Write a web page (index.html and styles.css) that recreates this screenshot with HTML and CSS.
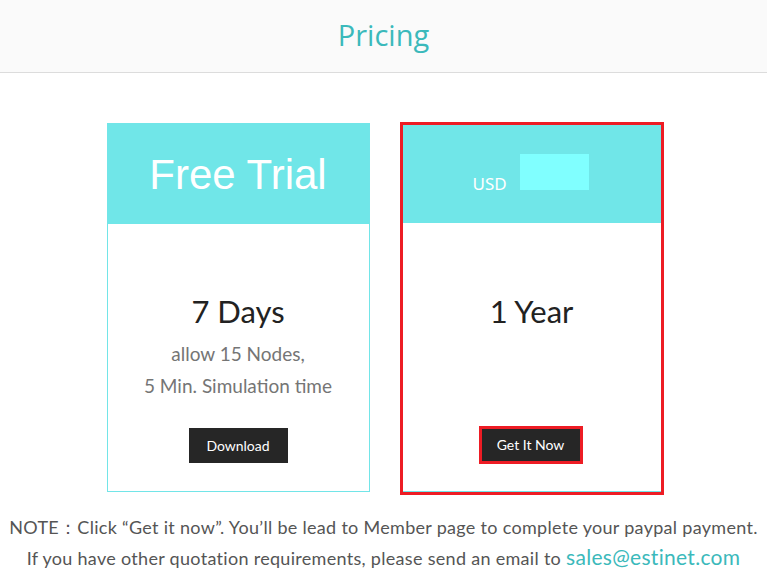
FILE: index.html
```html
<!DOCTYPE html>
<html lang="en">
  <head>
    <meta charset="UTF-8" />
    <meta name="viewport" content="width=device-width, initial-scale=1.0" />
    <title>Pricing</title>
    <link rel="stylesheet" href="styles.css">
  </head>
  <body>
    <header class="top">
      <h1>Pricing</h1>
    </header>

    <!-- Kartu harga -->
    <div class="plans">
      <div class="card card-trial">
        <div class="card-head">
          <span class="trial">Free Trial</span>
        </div>
        <div class="card-body">
          <h2>7 Days</h2>
          <p class="desc">allow 15 Nodes,<br />5 Min. Simulation time</p>
          <a class="btn" href="#">Download</a>
        </div>
      </div>

      <div class="card-mark">
        <div class="card card-year">
          <div class="card-head">
            <span class="usd">USD</span>
            <span class="price-box"></span>
          </div>
          <div class="card-body">
            <h2>1 Year</h2>
            <p class="desc"></p>
            <span class="btn-mark"><a class="btn" href="#">Get It Now</a></span>
          </div>
        </div>
      </div>
    </div>

    <div class="note">
      <p>NOTE：Click “Get it now”. You’ll be lead to Member page to complete your paypal payment.</p>
      <p>If you have other quotation requirements, please send an email to <a href="#">sales@estinet.com</a></p>
    </div>
  </body>
</html>
```

FILE: styles.css
```css
* {
  margin: 0;
  padding: 0;
  box-sizing: border-box;
}

body {
  font-family: Lato, "Open Sans", sans-serif;
  background: #fff;
  color: #333;
  width: 767px;
}

.top {
  height: 73px;
  background: #fafafa;
  border-bottom: 1px solid #dcdcdc;
  display: flex;
  justify-content: center;
  align-items: center;
}

.top h1 {
  font-family: "Open Sans", sans-serif;
  font-weight: 400;
  font-size: 29px;
  color: #3bb9bb;
  margin-bottom: 4px;
}

.plans {
  display: flex;
  justify-content: center;
  align-items: flex-start;
  gap: 30px;
  margin-top: 50px;
  padding-left: 3px;
}

.card {
  width: 263px;
  height: 369px;
  background: #fff;
  display: flex;
  flex-direction: column;
}

.card-trial {
  border: 1px solid #72e5e8;
}

.card-head {
  height: 100px;
  background: #70e6e8;
  display: flex;
  justify-content: center;
  align-items: center;
  color: #fff;
}

.trial {
  font-family: "Liberation Sans", Arial, sans-serif;
  font-size: 42px;
  margin-top: 1px;
}

.card-body {
  flex: 1;
  display: flex;
  flex-direction: column;
  align-items: center;
  padding-top: 67px;
}

.card-body h2 {
  font-weight: 400;
  font-size: 31px;
  color: #222;
  line-height: 40px;
}

.desc {
  font-size: 19px;
  color: #757575;
  line-height: 32px;
  text-align: center;
  height: 64px;
  margin-top: 7px;
}

.btn {
  display: inline-block;
  margin-top: 26px;
  width: 99px;
  height: 35px;
  line-height: 35px;
  text-align: center;
  background: #262626;
  color: #fff;
  font-size: 14px;
  text-decoration: none;
}

/* kotak merah penanda */
.card-mark {
  border: 3px solid #ed1c24;
  margin-top: -1px;
}

.card-year {
  width: 258px;
  height: 367px;
  border-bottom: 1px solid #72e5e8;
}

.card-year .card-head {
  height: 98px;
  justify-content: flex-start;
  padding-left: 70px;
  gap: 13px;
}

.usd {
  font-family: "Noto Sans", sans-serif;
  font-size: 17px;
  margin-top: 18px;
}

.price-box {
  width: 69px;
  height: 36px;
  background: #80ffff;
  margin-top: -4px;
}

.card-year .card-body {
  padding-top: 68px;
}

.btn-mark {
  display: inline-block;
  margin-top: 24px;
  margin-left: -2px;
  border: 3px solid #ed1c24;
}

.btn-mark .btn {
  margin-top: 0;
  width: 98px;
  height: 32px;
  line-height: 32px;
}

.note {
  margin-top: 18px;
  text-align: center;
  font-size: 18px;
  letter-spacing: 0.3px;
  color: #555;
  line-height: 29px;
  white-space: nowrap;
}

.note a {
  color: #3bb9bb;
  font-size: 21px;
  text-decoration: none;
}
```
